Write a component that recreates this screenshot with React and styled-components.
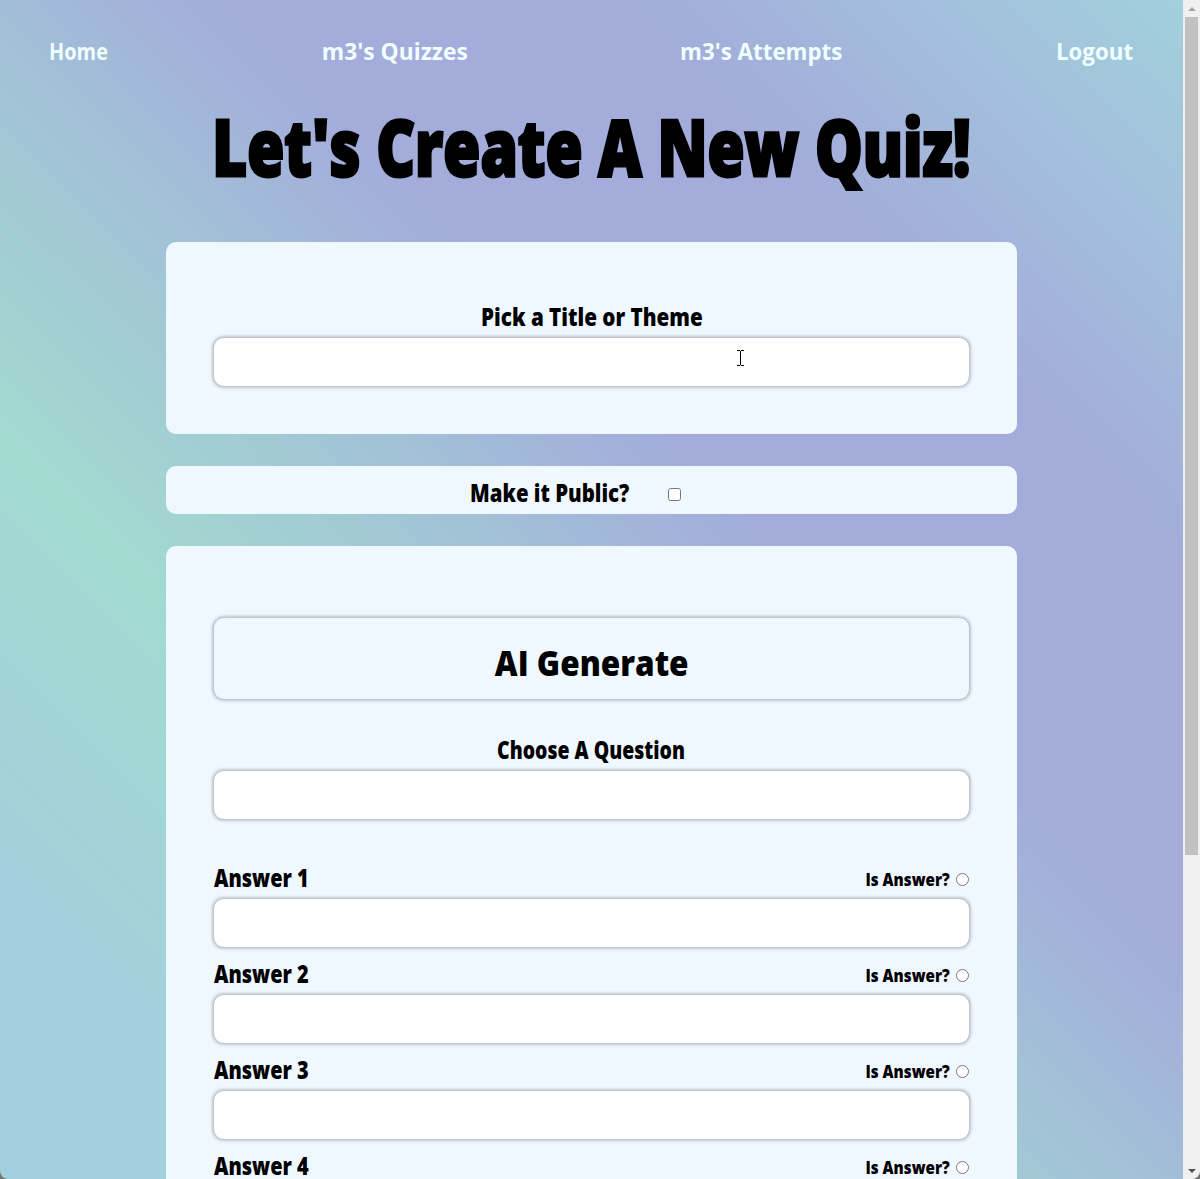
import React from "react";
import styled, { createGlobalStyle } from "styled-components";

const GlobalStyle = createGlobalStyle`
  * { box-sizing: border-box; }
  html, body { margin: 0; height: 1179px; overflow: hidden; background: #77706c; }
  body { font-family: "Open Sans", "Noto Sans", sans-serif; color: #000; }
`;

const Window = styled.div`
  display: flex;
  width: 1200px;
  height: 1179px;
  overflow: hidden;
`;

const Page = styled.div`
  flex: 1;
  height: 1179px;
  overflow: hidden;
  padding: 0 166px;
  border-bottom-left-radius: 8px;
  background: linear-gradient(
    45deg,
    #a2d0dc 0,
    #a2d0dc 230px,
    #a2dacf 525px,
    #a2c2d6 790px,
    #a3acdb 995px,
    #a3acdb 1275px,
    #a2d0dc 1670px
  );
`;

const Nav = styled.nav`
  display: flex;
  justify-content: space-between;
  margin: 0 -117px;
  padding: 32px 0 0;
  height: 72px;
`;

const Fit = styled.span`
  display: inline-block;
  white-space: nowrap;
  transform: scaleX(${(p) => p.$x || 1});
  transform-origin: ${(p) => p.$from || "center"};
`;

const NavLink = styled.a`
  display: flex;
  justify-content: center;
  width: ${(p) => p.$w}px;
  font-size: 24px;
  line-height: 38px;
  font-weight: 700;
  color: #f0ffff;
`;

const Heading = styled.h1`
  display: flex;
  justify-content: center;
  margin: 0;
  height: 170px;
  font-size: 78px;
  line-height: 148px;
  font-weight: 800;
  -webkit-text-stroke: 3px #000;
`;

const Card = styled.section`
  display: flex;
  flex-direction: column;
  height: ${(p) => p.$h}px;
  margin-bottom: 32px;
  padding: ${(p) => p.$pad};
  border-radius: 10px;
  background: #f0f8ff;
`;

const Label = styled.label`
  display: flex;
  justify-content: center;
  margin-bottom: 2px;
  font-size: 24px;
  font-weight: 800;
  line-height: 36px;
`;

const Field = styled.input`
  display: block;
  width: 100%;
  height: 50px;
  padding: 0 16px;
  border: 1px solid #c1c4ca;
  border-radius: 11px;
  background: #fff;
  box-shadow: 0 0 3px 1px rgba(0, 0, 0, 0.22);
  outline: none;
`;

const PublicRow = styled.div`
  display: flex;
  align-items: center;
  height: 48px;
  padding: 6px 0 0 304px;
`;

const PublicLabel = styled(Label)`
  width: 160px;
  margin: 0 38px 0 0;
`;

const Check = styled.input`
  width: 13px;
  height: 13px;
  margin: 9px 0 7px;
`;

const Generate = styled.button`
  height: 83px;
  flex: none;
  padding: 8px 0 0;
  border: 1px solid #c1c4ca;
  border-radius: 11px;
  background: #f0f8ff;
  box-shadow: 0 0 3px 1px rgba(0, 0, 0, 0.22);
  color: #000;
  font: 800 36px/48px "Open Sans", "Noto Sans", sans-serif;
`;

const Question = styled.div`
  margin: 32px 0 40px;
`;

const Answer = styled.div`
  height: 96px;
  flex: none;
`;

const AnswerHead = styled.div`
  display: flex;
  justify-content: space-between;
  align-items: center;
  height: 38px;
  padding: 0 1px 2px;
  font-weight: 800;
  font-size: 24px;
  line-height: 24px;
`;

const Choice = styled.label`
  display: flex;
  align-items: center;
  justify-content: flex-end;
  gap: 6px;
  padding-top: 2px;
  font-size: 18px;
`;

const Radio = styled.input`
  width: 13px;
  height: 13px;
  margin: 0;
`;

const Scrollbar = styled.div`
  display: flex;
  flex-direction: column;
  align-items: center;
  width: 17px;
  height: 1179px;
  padding: 7px 0 6px;
  background: #f0f0f0;
  border-bottom-right-radius: 8px;
`;

const Arrow = styled.i`
  border: solid transparent;
  border-width: 0 4px;
  ${(p) => (p.$down ? "border-top: 4px solid #505050; margin-top: auto;" : "border-bottom: 4px solid #a3a3a3;")}
`;

const Thumb = styled.div`
  width: 13px;
  height: 838px;
  margin-top: 6px;
  background: #c1c1c1;
`;

const Cursor = styled.svg`
  position: absolute;
  left: 737px;
  top: 350px;
`;

const links = [
  ["Home", 59, 0.83],
  ["m3's Quizzes", 146, 0.95],
  ["m3's Attempts", 162, 0.93],
  ["Logout", 78, 0.93],
];

export default function App() {
  return (
    <Window>
      <GlobalStyle />
      <Page>
        <Nav>
          {links.map(([text, w, x]) => (
            <NavLink key={text} $w={w}><Fit $x={x}>{text}</Fit></NavLink>
          ))}
        </Nav>
        <Heading><Fit $x={0.77}>Let's Create A New Quiz!</Fit></Heading>
        <Card $h={192} $pad="57px 47px 0">
          <Label><Fit $x={0.86}>Pick a Title or Theme</Fit></Label>
          <Field />
        </Card>
        <Card $h={48} $pad="0">
          <PublicRow>
            <PublicLabel><Fit $x={0.85}>Make it Public?</Fit></PublicLabel>
            <Check type="checkbox" />
          </PublicRow>
        </Card>
        <Card $h={900} $pad="71px 47px 0">
          <Generate><Fit $x={0.875}>AI Generate</Fit></Generate>
          <Question>
            <Label><Fit $x={0.81}>Choose A Question</Fit></Label>
            <Field />
          </Question>
          {[1, 2, 3, 4].map((n) => (
            <Answer key={n}>
              <AnswerHead>
                <Fit $x={0.83} $from="left">Answer {n}</Fit>
                <Choice>
                  <Fit $x={0.845} $from="right">Is Answer?</Fit>
                  <Radio type="radio" name="correct" />
                </Choice>
              </AnswerHead>
              <Field />
            </Answer>
          ))}
        </Card>
      </Page>
      <Scrollbar><Arrow /><Thumb /><Arrow $down /></Scrollbar>
      <Cursor width="7" height="16" viewBox="0 0 7 16" shapeRendering="crispEdges">
        <path d="M0 .5h3m1 0h3M3.5 1v14M0 15.5h3m1 0h3" stroke="#000" fill="none" />
      </Cursor>
    </Window>
  );
}
